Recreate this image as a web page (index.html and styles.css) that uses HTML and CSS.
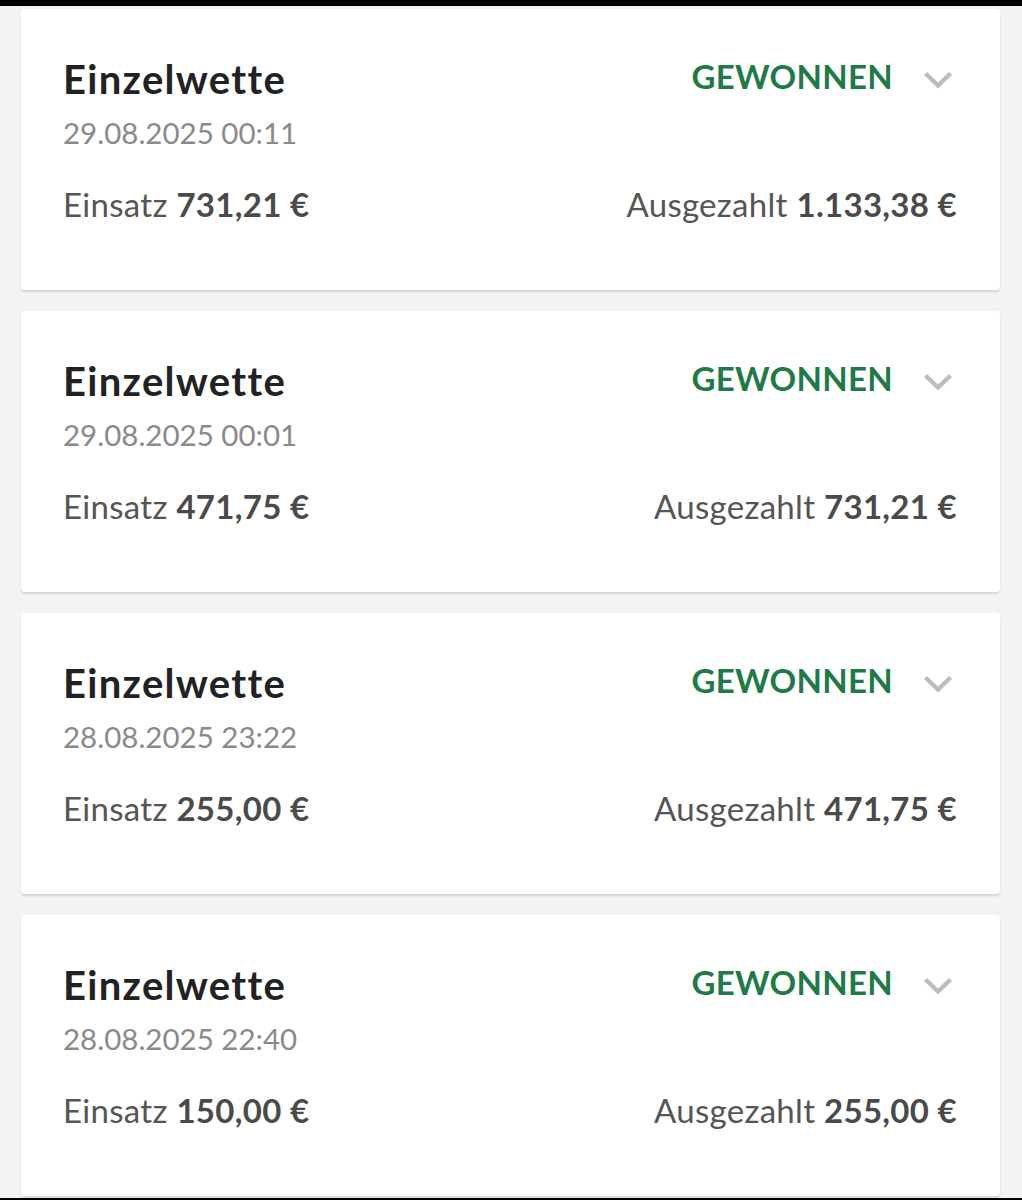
FILE: index.html
```html
<!DOCTYPE html>
<html lang="de">
<head>
    <meta charset="UTF-8">
    <meta name="viewport" content="width=device-width, initial-scale=1.0">
    <title>Wetthistorie</title>
    <link rel="stylesheet" href="styles.css">
</head>

<body>

<div class="topbar"></div>

<div class="bets">
    <!-- Wette 1 -->
    <div class="bet">
        <div class="bet-head">
            <div>
                <h3>Einzelwette</h3>
                <p class="date">29.08.2025 00:11</p>
            </div>
            <div class="status">
                <span>GEWONNEN</span>
                <svg class="chevron" width="30" height="18" viewBox="0 0 30 18"><path d="M2.5 2.5 L15 14.5 L27.5 2.5" fill="none" stroke="#bdbdbd" stroke-width="4.5"/></svg>
            </div>
        </div>
        <div class="bet-row">
            <span>Einsatz <b>731,21 €</b></span>
            <span>Ausgezahlt <b>1.133,38 €</b></span>
        </div>
    </div>

    <!-- Wette 2 -->
    <div class="bet">
        <div class="bet-head">
            <div>
                <h3>Einzelwette</h3>
                <p class="date">29.08.2025 00:01</p>
            </div>
            <div class="status">
                <span>GEWONNEN</span>
                <svg class="chevron" width="30" height="18" viewBox="0 0 30 18"><path d="M2.5 2.5 L15 14.5 L27.5 2.5" fill="none" stroke="#bdbdbd" stroke-width="4.5"/></svg>
            </div>
        </div>
        <div class="bet-row">
            <span>Einsatz <b>471,75 €</b></span>
            <span>Ausgezahlt <b>731,21 €</b></span>
        </div>
    </div>

    <!-- Wette 3 -->
    <div class="bet">
        <div class="bet-head">
            <div>
                <h3>Einzelwette</h3>
                <p class="date">28.08.2025 23:22</p>
            </div>
            <div class="status">
                <span>GEWONNEN</span>
                <svg class="chevron" width="30" height="18" viewBox="0 0 30 18"><path d="M2.5 2.5 L15 14.5 L27.5 2.5" fill="none" stroke="#bdbdbd" stroke-width="4.5"/></svg>
            </div>
        </div>
        <div class="bet-row">
            <span>Einsatz <b>255,00 €</b></span>
            <span>Ausgezahlt <b>471,75 €</b></span>
        </div>
    </div>

    <!-- Wette 4 -->
    <div class="bet">
        <div class="bet-head">
            <div>
                <h3>Einzelwette</h3>
                <p class="date">28.08.2025 22:40</p>
            </div>
            <div class="status">
                <span>GEWONNEN</span>
                <svg class="chevron" width="30" height="18" viewBox="0 0 30 18"><path d="M2.5 2.5 L15 14.5 L27.5 2.5" fill="none" stroke="#bdbdbd" stroke-width="4.5"/></svg>
            </div>
        </div>
        <div class="bet-row">
            <span>Einsatz <b>150,00 €</b></span>
            <span>Ausgezahlt <b>255,00 €</b></span>
        </div>
    </div>
</div>

<div class="bottombar"></div>

</body>
</html>
```

FILE: styles.css
```css
body {
    font-family: Lato, "Open Sans", sans-serif;
    margin: 0;
    padding: 0;
    background: #f2f3f3;
    height: 1200px;
    overflow: hidden;
}

.topbar {
    height: 6px;
    background: #000;
}

.bottombar {
    height: 4px;
    background: #000;
}

.bets {
    display: flex;
    flex-direction: column;
    gap: 21px;
    padding: 3px 22px 2px 21px;
}

.bet {
    height: 281px;
    box-sizing: border-box;
    padding: 48px 43px 0 42px;
    background: white;
    border-radius: 4px;
    box-shadow: 0 2px 2px rgba(0, 0, 0, 0.12);
}

.bet-head {
    display: flex;
    justify-content: space-between;
    align-items: flex-start;
}

.bet h3 {
    margin: 0;
    font-size: 40px;
    line-height: 44px;
    font-weight: 700;
    letter-spacing: 1.3px;
    color: #222;
}

.date {
    margin: 14px 0 0 0;
    font-size: 29.5px;
    line-height: 36px;
    color: #8a8a8a;
}

.status {
    display: flex;
    align-items: center;
    gap: 30px;
    padding-right: 4px;
    height: 44px;
}

.status span {
    font-size: 33px;
    font-weight: 700;
    color: #1e7a46;
    letter-spacing: 0.3px;
    margin-top: -6px;
}

.chevron {
    margin-top: 2px;
}

.bet-row {
    display: flex;
    justify-content: space-between;
    margin-top: 33px;
    font-size: 33px;
    line-height: 40px;
    letter-spacing: 0.3px;
    color: #555;
}

.bet-row b {
    color: #4a4a4a;
}
```
